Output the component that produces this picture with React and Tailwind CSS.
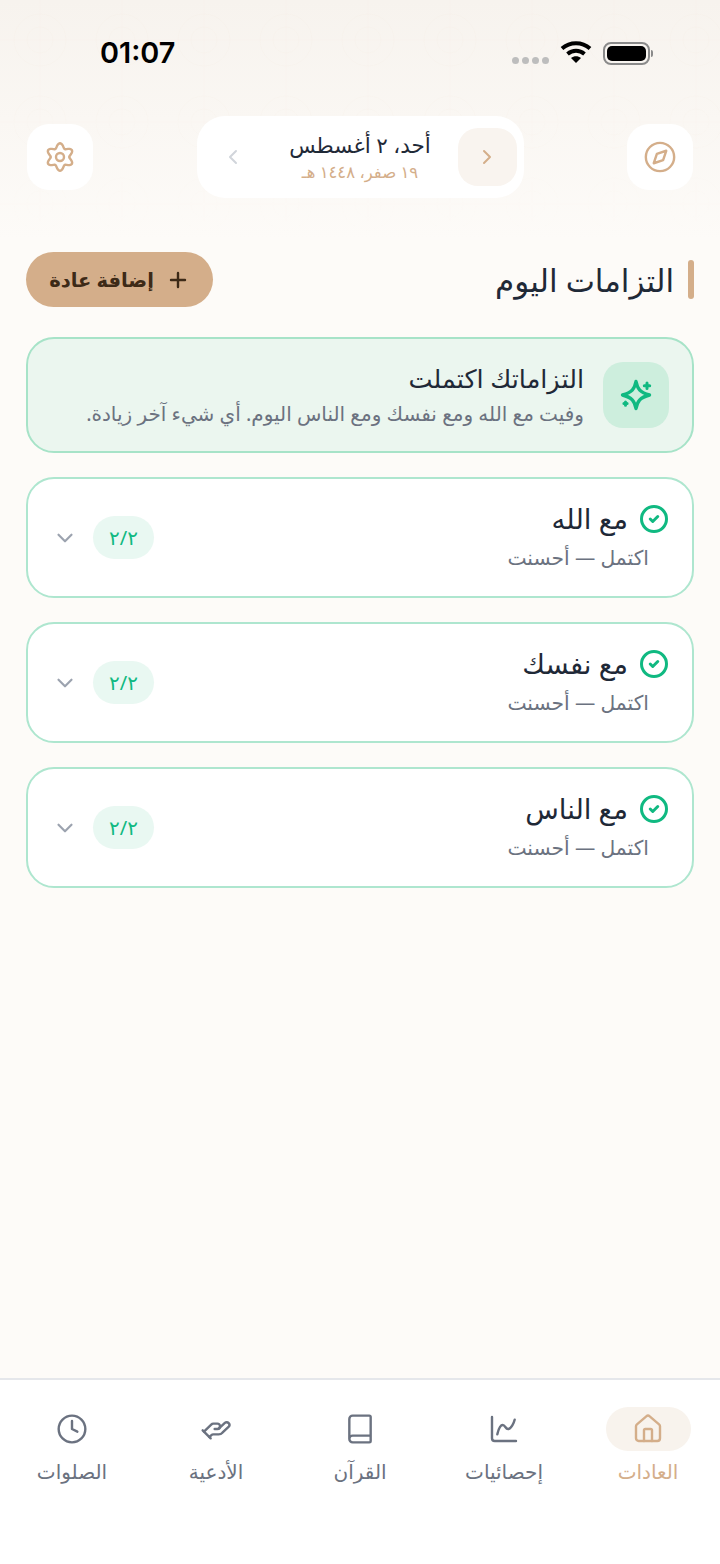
import { ChevronDown, ChevronLeft, ChevronRight, CircleCheck, Clock, HandHelping, House, ChartSpline, Plus, Book } from "lucide-react";

const font = { fontFamily: '"Noto Sans", "DejaVu Sans", sans-serif' };

const groups = ["مع الله", "مع نفسك", "مع الناس"];

const tabs = [
  { label: "العادات", Icon: House, active: true },
  { label: "إحصائيات", Icon: ChartSpline },
  { label: "القرآن", Icon: Book },
  { label: "الأدعية", Icon: HandHelping },
  { label: "الصلوات", Icon: Clock },
];

// soft six lobed cog outline
const cogPath = Array.from({ length: 72 }, (_, i) => {
  const a = (i / 72) * Math.PI * 2;
  const r = 8.6 + 1.7 * Math.cos(6 * a);
  return `${i === 0 ? "M" : "L"}${(12 + r * Math.sin(a)).toFixed(2)} ${(12 - r * Math.cos(a)).toFixed(2)}`;
}).join(" ") + "Z";

function CogIcon() {
  return (
    <svg width="32" height="32" viewBox="0 0 24 24" fill="none" stroke="#d4ae8a" strokeWidth="1.8">
      <path d={cogPath} strokeLinejoin="round" />
      <circle cx="12" cy="12" r="3" />
    </svg>
  );
}

function CompassIcon() {
  return (
    <svg width="34" height="34" viewBox="0 0 24 24" fill="none" stroke="#d4ae8a" strokeWidth="1.7" strokeLinejoin="round">
      <circle cx="12" cy="12" r="10" />
      <path d="M16.4 7.6 14.2 14.2 7.6 16.4 9.8 9.8Z" />
    </svg>
  );
}

function StarIcon() {
  return (
    <svg width="36" height="36" viewBox="0 0 36 36" fill="none" stroke="#10b981" strokeWidth="3.4" strokeLinejoin="round" strokeLinecap="round">
      <path d="M18 4.5C19.5 12 22 15.5 31.5 18C22 20.5 19.5 24 18 31.5C16.5 24 14 20.5 4.5 18C14 15.5 16.5 12 18 4.5Z" />
      <path d="M29 6v5.4M26.3 8.7h5.4" strokeWidth="3" />
      <path d="M7.5 25v3.2M5.9 26.6h3.2" strokeWidth="3" />
    </svg>
  );
}

function GroupCard({ title }) {
  return (
    <div className="flex h-[121px] items-center justify-between rounded-[28px] border-2 border-[#aee6cf] bg-white pl-[24px] pr-[23px]">
      <div className="-mt-[4px]">
        <div className="flex items-center gap-[11px]">
          <CircleCheck className="h-[30px] w-[30px] text-[#10b981]" strokeWidth={2.4} />
          <span className="text-[27.5px] leading-[40px] text-[#1f2937]">{title}</span>
        </div>
        <p className="mr-[20px] mt-[3px] text-[20.3px] leading-[30px] text-[#6b7280]">اكتمل — أحسنت</p>
      </div>
      <div className="flex items-center gap-[15px]">
        <span className="flex h-[43px] w-[61px] items-center justify-center rounded-full bg-[#e9f8f2] text-[20px] text-[#10b981]">٢/٢</span>
        <ChevronDown className="h-[26px] w-[26px] text-[#9ca3af]" strokeWidth={2} />
      </div>
    </div>
  );
}

export default function App() {
  return (
    <div dir="rtl" style={font} className="flex h-[1564px] w-[720px] flex-col overflow-hidden bg-[#fdfbf8]">
      <div className="relative isolate flex-1 bg-gradient-to-b from-[#f7f3ee] to-[#fdfbf8] bg-[length:100%_240px] bg-no-repeat">
        {/* faint background pattern */}
        <svg className="absolute left-0 top-0 -z-10 h-[260px] w-full [mask-image:linear-gradient(to_bottom,black_40%,transparent)]" fill="none">
          <defs>
            <pattern id="rings" width="82" height="82" patternUnits="userSpaceOnUse">
              <g stroke="#b89b7a" strokeOpacity="0.025">
                <circle cx="40" cy="40" r="26" />
                <circle cx="40" cy="40" r="13" />
                <path d="M40 0V82M0 40H82" strokeOpacity="0.015" />
              </g>
            </pattern>
          </defs>
          <rect width="100%" height="100%" fill="url(#rings)" />
        </svg>

        {/* status bar */}
        <div dir="ltr" className="flex h-[106px] items-center justify-between pl-[100px] pr-[67px]">
          <span className="font-['Inter'] text-[28.8px] font-semibold text-black">01:07</span>
          <div className="flex items-center gap-[11px]">
            <div className="mt-[14px] flex gap-[3px]">
              <span className="h-[7px] w-[7px] rounded-full bg-[#bdbdbd]" />
              <span className="h-[7px] w-[7px] rounded-full bg-[#bdbdbd]" />
              <span className="h-[7px] w-[7px] rounded-full bg-[#bdbdbd]" />
              <span className="h-[7px] w-[7px] rounded-full bg-[#bdbdbd]" />
            </div>
            <svg className="-mt-[2px]" width="32" height="24" viewBox="0 0 32 24" fill="none" stroke="black" strokeWidth="4">
              <path d="M2 8.5C10 1.5 22 1.5 30 8.5" />
              <path d="M7.5 14C12.5 9.8 19.5 9.8 24.5 14" />
              <path d="M16 23l-5-5c3-2.4 7-2.4 10 0z" fill="black" stroke="none" />
            </svg>
            <div className="flex items-center gap-[1px]">
              <div className="h-[23px] w-[47px] rounded-[8px] border-2 border-[#8a8a8a] p-[2px]">
                <div className="h-full w-full rounded-[5px] bg-black" />
              </div>
              <div className="h-[7px] w-[2px] rounded-r bg-[#8a8a8a]" />
            </div>
          </div>
        </div>

        {/* top header */}
        <div className="mt-[10px] flex items-center justify-between px-[27px]">
          <button className="flex h-[66px] w-[66px] items-center justify-center rounded-[22px] bg-white">
            <CompassIcon />
          </button>
          <div className="flex h-[82px] w-[327px] items-center justify-between rounded-[28px] bg-white px-[7px]">
            <button className="flex h-[58px] w-[59px] items-center justify-center rounded-[20px] bg-[#f9f4ef]">
              <ChevronRight className="h-[24px] w-[24px] text-[#d4ae8a]" strokeWidth={2} />
            </button>
            <div className="text-center">
              <div className="text-[21.5px] leading-[30px] text-[#1f2937]">أحد، ٢ أغسطس</div>
              <div className="text-[16.5px] leading-[24px] text-[#d4ae8a]">١٩ صفر، ١٤٤٨ هـ</div>
            </div>
            <button className="flex h-[58px] w-[59px] items-center justify-center">
              <ChevronLeft className="h-[24px] w-[24px] text-[#d1d5db]" strokeWidth={2} />
            </button>
          </div>
          <button className="flex h-[66px] w-[66px] items-center justify-center rounded-[22px] bg-white">
            <CogIcon />
          </button>
        </div>

        {/* section title */}
        <div className="mt-[54px] flex items-center justify-between px-[26px]">
          <div className="flex items-center gap-[14px]">
            <span className="h-[39px] w-[6px] rounded-full bg-[#d4ae8a]" />
            <h1 className="text-[31px] font-normal leading-[50px] text-[#1f2937]">التزامات اليوم</h1>
          </div>
          <button className="flex h-[55px] w-[187px] items-center justify-center gap-[12px] rounded-full bg-[#d4ae8a] text-[19.5px] font-semibold text-[#3d2a17]">
            <Plus className="h-[24px] w-[24px]" strokeWidth={2.4} />
            إضافة عادة
          </button>
        </div>

        {/* list */}
        <div className="mt-[30px] flex flex-col gap-[24px] px-[26px]">
          <div className="flex h-[116px] items-center gap-[19px] rounded-[28px] border-2 border-[#a7e3c8] bg-[#ebf6ef] pr-[23px]">
            <div className="flex h-[66px] w-[66px] items-center justify-center rounded-[20px] bg-[#cdeedd]">
              <StarIcon />
            </div>
            <div>
              <div className="-mt-[2px] text-[25.5px] leading-[38px] text-[#1f2937]">التزاماتك اكتملت</div>
              <div className="mt-[2px] text-[20px] leading-[30px] text-[#6b7280]">وفيت مع الله ومع نفسك ومع الناس اليوم. أي شيء آخر زيادة.</div>
            </div>
          </div>
          {groups.map((g) => (
            <GroupCard key={g} title={g} />
          ))}
        </div>
      </div>

      {/* bottom nav */}
      <nav className="grid h-[186px] grid-cols-5 border-t-2 border-[#e5e7eb] bg-white pt-[27px]">
        {tabs.map(({ label, Icon, active }) => (
          <div key={label} className="flex flex-col items-center">
            <div className={`flex h-[44px] w-[85px] items-center justify-center rounded-full ${active ? "bg-[#f8f3ed]" : ""}`}>
              <Icon className={`h-[32px] w-[32px] ${active ? "text-[#d4ae8a]" : "text-[#6b7280]"}`} strokeWidth={1.8} />
            </div>
            <span className={`mt-[6px] text-[20px] leading-[30px] ${active ? "text-[#d4ae8a]" : "text-[#6b7280]"}`}>{label}</span>
          </div>
        ))}
      </nav>
    </div>
  );
}
